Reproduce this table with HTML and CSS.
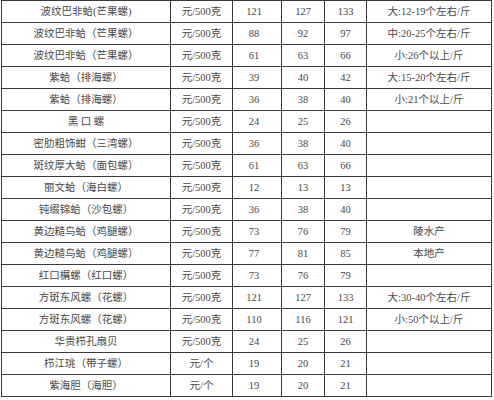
FILE: index.html
```html
<!DOCTYPE html>
<html lang="zh-CN">
<head>
<meta charset="utf-8">
<title>价格表</title>
<link rel="stylesheet" href="styles.css">
</head>
<body>
<div class="sheet">
  <div class="c name">波纹巴非蛤(芒果螺)</div><div class="c unit">元/500克</div><div class="c n1">121</div><div class="c n2">127</div><div class="c n3">133</div><div class="c note">大:12-19个左右/斤</div>
  <div class="c name">波纹巴非蛤（芒果螺）</div><div class="c unit">元/500克</div><div class="c n1">88</div><div class="c n2">92</div><div class="c n3">97</div><div class="c note">中:20-25个左右/斤</div>
  <div class="c name">波纹巴非蛤（芒果螺）</div><div class="c unit">元/500克</div><div class="c n1">61</div><div class="c n2">63</div><div class="c n3">66</div><div class="c note">小:26个以上/斤</div>
  <div class="c name">紫蛤（排海螺）</div><div class="c unit">元/500克</div><div class="c n1">39</div><div class="c n2">40</div><div class="c n3">42</div><div class="c note">大:15-20个左右/斤</div>
  <div class="c name">紫蛤（排海螺）</div><div class="c unit">元/500克</div><div class="c n1">36</div><div class="c n2">38</div><div class="c n3">40</div><div class="c note">小:21个以上/斤</div>
  <div class="c name">黑 口 螺</div><div class="c unit">元/500克</div><div class="c n1">24</div><div class="c n2">25</div><div class="c n3">26</div><div class="c note"></div>
  <div class="c name">密肋粗饰蚶（三湾螺）</div><div class="c unit">元/500克</div><div class="c n1">36</div><div class="c n2">38</div><div class="c n3">40</div><div class="c note"></div>
  <div class="c name">斑纹厚大蛤（面包螺）</div><div class="c unit">元/500克</div><div class="c n1">61</div><div class="c n2">63</div><div class="c n3">66</div><div class="c note"></div>
  <div class="c name">丽文蛤（海白螺）</div><div class="c unit">元/500克</div><div class="c n1">12</div><div class="c n2">13</div><div class="c n3">13</div><div class="c note"></div>
  <div class="c name">钝缀锦蛤（沙包螺）</div><div class="c unit">元/500克</div><div class="c n1">36</div><div class="c n2">38</div><div class="c n3">40</div><div class="c note"></div>
  <div class="c name">黄边糙鸟蛤（鸡腿螺）</div><div class="c unit">元/500克</div><div class="c n1">73</div><div class="c n2">76</div><div class="c n3">79</div><div class="c note">陵水产</div>
  <div class="c name">黄边糙鸟蛤（鸡腿螺）</div><div class="c unit">元/500克</div><div class="c n1">77</div><div class="c n2">81</div><div class="c n3">85</div><div class="c note">本地产</div>
  <div class="c name">红口榍螺（红口螺）</div><div class="c unit">元/500克</div><div class="c n1">73</div><div class="c n2">76</div><div class="c n3">79</div><div class="c note"></div>
  <div class="c name">方斑东风螺（花螺）</div><div class="c unit">元/500克</div><div class="c n1">121</div><div class="c n2">127</div><div class="c n3">133</div><div class="c note">大:30-40个左右/斤</div>
  <div class="c name">方斑东风螺（花螺）</div><div class="c unit">元/500克</div><div class="c n1">110</div><div class="c n2">116</div><div class="c n3">121</div><div class="c note">小:50个以上/斤</div>
  <div class="c name">华贵栉孔扇贝</div><div class="c unit">元/500克</div><div class="c n1">24</div><div class="c n2">25</div><div class="c n3">26</div><div class="c note"></div>
  <div class="c name">栉江珧（带子螺）</div><div class="c unit">元/个</div><div class="c n1">19</div><div class="c n2">20</div><div class="c n3">21</div><div class="c note"></div>
  <div class="c name">紫海胆（海胆）</div><div class="c unit">元/个</div><div class="c n1">19</div><div class="c n2">20</div><div class="c n3">21</div><div class="c note"></div>
</div>
</body>
</html>
```
FILE: styles.css
```css
html, body {
  margin: 0;
  padding: 0;
  background: #ffffff;
}
body {
  font-family: "Liberation Serif", "Noto Sans CJK SC", serif;
  font-size: 10.5px;
  color: #484848;
}
.sheet {
  display: grid;
  grid-template-columns: 169px 62px 49px 43px 42px 125px;
  grid-auto-rows: 22px;
  margin-left: 1px;
  width: max-content;
  border-left: 1px solid #3a3a3a;
  border-top: 1px solid #3a3a3a;
}
.c {
  box-sizing: border-box;
  border-right: 1px solid #3a3a3a;
  border-bottom: 1px solid #3a3a3a;
  display: flex;
  align-items: center;
  justify-content: center;
  white-space: nowrap;
  line-height: 1;
  padding-top: 1px;
}
.n1 {
  padding-right: 6px;
}
```
